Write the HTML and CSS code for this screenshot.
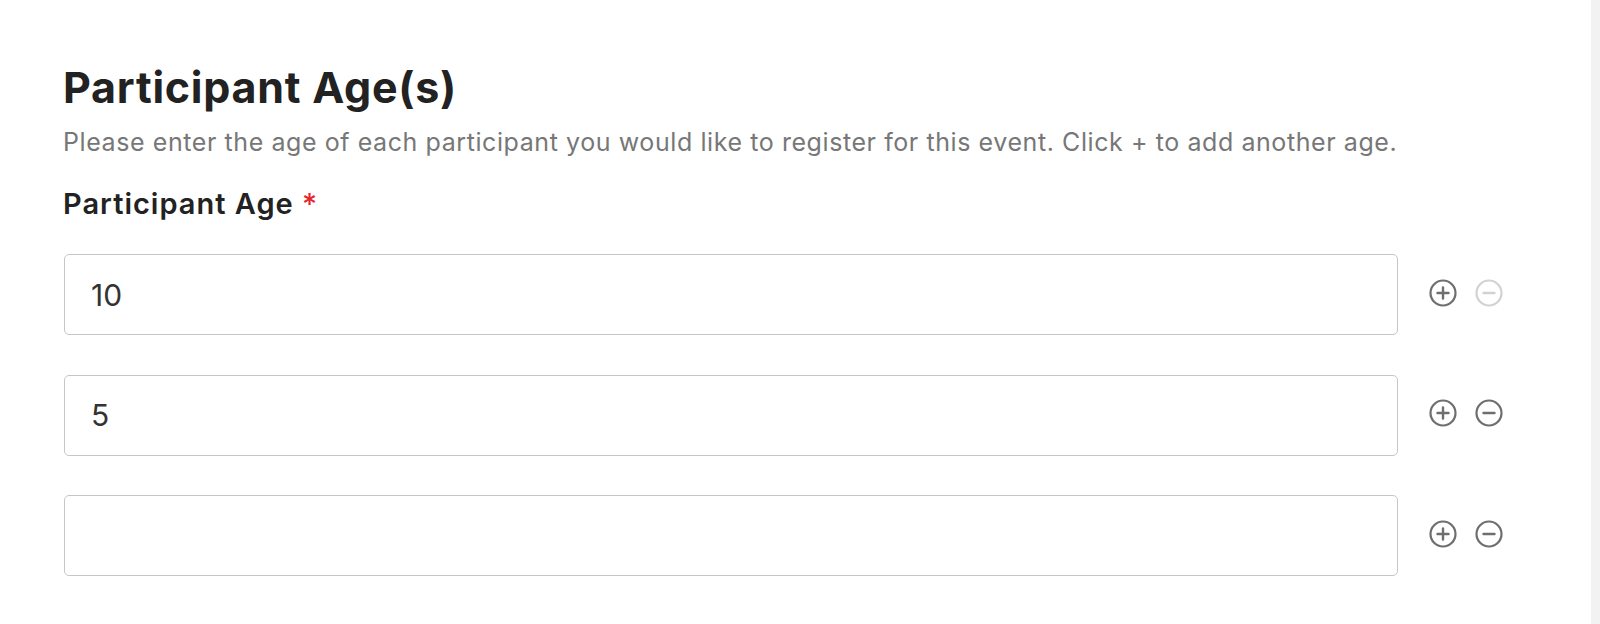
FILE: index.html
```html
<!DOCTYPE html>
<html lang="en">
<head>
    <meta charset="UTF-8">
    <meta name="viewport" content="width=device-width, initial-scale=1.0">
    <title>Participant Age(s)</title>
    <link rel="stylesheet" href="styles.css">
</head>
<body>
    <div class="page">
        <main class="content">
            <h1 class="title">Participant Age(s)</h1>
            <p class="hint">Please enter the age of each participant you would like to register for this event. Click + to add another age.</p>
            <label class="field-label" for="age1">Participant Age <span class="req">*</span></label>

            <div class="age-list">
                <div class="age-row">
                    <input class="age-input" type="text" id="age1" value="10">
                    <div class="row-actions">
                        <button class="icon-btn" type="button" title="Add">
                            <svg width="28" height="28" viewBox="0 0 28 28"><circle cx="14" cy="14" r="12.5" fill="none" stroke="currentColor" stroke-width="2.2"/><path d="M14 8.5v11M8.5 14h11" stroke="currentColor" stroke-width="2.4" stroke-linecap="round"/></svg>
                        </button>
                        <button class="icon-btn disabled" type="button" title="Remove">
                            <svg width="28" height="28" viewBox="0 0 28 28"><circle cx="14" cy="14" r="12.5" fill="none" stroke="currentColor" stroke-width="2.2"/><path d="M8.5 14h11" stroke="currentColor" stroke-width="2.4" stroke-linecap="round"/></svg>
                        </button>
                    </div>
                </div>
                <div class="age-row">
                    <input class="age-input" type="text" value="5">
                    <div class="row-actions">
                        <button class="icon-btn" type="button" title="Add">
                            <svg width="28" height="28" viewBox="0 0 28 28"><circle cx="14" cy="14" r="12.5" fill="none" stroke="currentColor" stroke-width="2.2"/><path d="M14 8.5v11M8.5 14h11" stroke="currentColor" stroke-width="2.4" stroke-linecap="round"/></svg>
                        </button>
                        <button class="icon-btn" type="button" title="Remove">
                            <svg width="28" height="28" viewBox="0 0 28 28"><circle cx="14" cy="14" r="12.5" fill="none" stroke="currentColor" stroke-width="2.2"/><path d="M8.5 14h11" stroke="currentColor" stroke-width="2.4" stroke-linecap="round"/></svg>
                        </button>
                    </div>
                </div>
                <div class="age-row">
                    <input class="age-input" type="text" value="">
                    <div class="row-actions">
                        <button class="icon-btn" type="button" title="Add">
                            <svg width="28" height="28" viewBox="0 0 28 28"><circle cx="14" cy="14" r="12.5" fill="none" stroke="currentColor" stroke-width="2.2"/><path d="M14 8.5v11M8.5 14h11" stroke="currentColor" stroke-width="2.4" stroke-linecap="round"/></svg>
                        </button>
                        <button class="icon-btn" type="button" title="Remove">
                            <svg width="28" height="28" viewBox="0 0 28 28"><circle cx="14" cy="14" r="12.5" fill="none" stroke="currentColor" stroke-width="2.2"/><path d="M8.5 14h11" stroke="currentColor" stroke-width="2.4" stroke-linecap="round"/></svg>
                        </button>
                    </div>
                </div>
            </div>
        </main>
        <div class="scroll-track"></div>
    </div>
</body>
</html>
```

FILE: styles.css
```css
* {
    box-sizing: border-box;
}
body {
    margin: 0;
    font-family: Inter, 'Noto Sans', sans-serif;
    background-color: #fff;
    color: #222;
}
.page {
    display: flex;
    min-height: 624px;
}
.content {
    flex: 1;
    padding: 63px 0 0 63px;
}
.scroll-track {
    width: 9px;
    background-color: #f2f2f2;
}
.title {
    margin: 0;
    font-size: 43px;
    line-height: 48px;
    font-weight: 700;
    letter-spacing: 0.75px;
    color: #222;
}
.hint {
    margin: 16px 0 0;
    font-size: 25px;
    line-height: 30px;
    letter-spacing: 0.58px;
    color: #777;
}
.field-label {
    display: block;
    margin-top: 30px;
    font-size: 29px;
    line-height: 34px;
    font-weight: 600;
    letter-spacing: 1px;
    color: #222;
}
.req {
    color: #e8262d;
    font-weight: 500;
    letter-spacing: 0;
}
.age-list {
    display: flex;
    flex-direction: column;
    gap: 39.5px;
    margin-top: 33px;
    padding-left: 1px;
}
.age-row {
    display: flex;
    align-items: center;
}
.age-input {
    width: 1334px;
    height: 81px;
    padding: 0 26px;
    border: 1.5px solid #c6c6c6;
    border-radius: 5px;
    font-family: Inter, 'Noto Sans', sans-serif;
    font-size: 30px;
    color: #333;
    outline: none;
}
.row-actions {
    display: flex;
    gap: 18px;
    margin-left: 31px;
    margin-top: -4px;
}
.icon-btn {
    display: flex;
    padding: 0;
    border: none;
    background: none;
    color: #6e6e6e;
    cursor: pointer;
}
.icon-btn.disabled {
    color: #d2d2d2;
    cursor: default;
}
```
